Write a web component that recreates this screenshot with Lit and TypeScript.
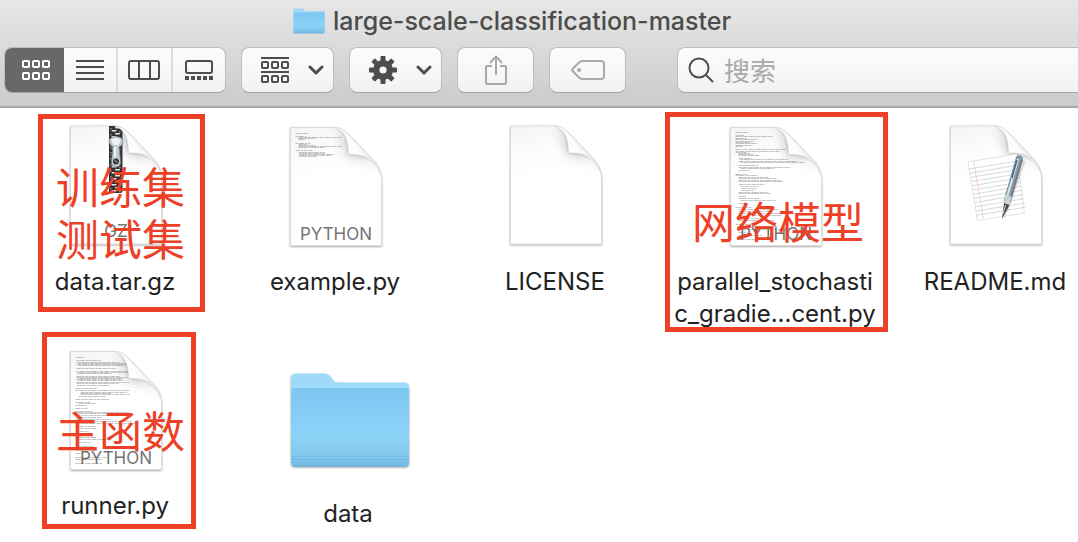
import { LitElement, html, svg, css, nothing } from "lit";
import { customElement, property } from "lit/decorators.js";

type Line = [number, number, number];

const EXAMPLE_CODE: Line[] = [
  [5, 6, 13], [5, 9, 11], [8, 10, 43], [8, 11, 17], [8, 12, 6],
  [5, 16, 15], [8, 17, 9], [8, 18, 17], [8, 19, 43], [8, 20, 26],
  [5, 23, 17], [8, 25, 27], [9, 26, 26], [8, 27, 36], [9, 28, 32], [8, 29, 18],
];

const GRADIENT_CODE: Line[] = [
  [5, 5, 14], [5, 8, 9], [5, 9, 37], [5, 11, 12], [5, 12, 22], [5, 14, 18], [5, 15, 15],
  [5, 16, 22], [5, 18, 16], [5, 19, 7], [5, 22, 50], [5, 24, 44], [5, 25, 11], [8, 26, 12],
  [8, 27, 15], [8, 28, 21], [8, 31, 12], [10, 32, 48], [8, 34, 58], [10, 35, 64],
  [8, 38, 20], [8, 40, 52], [10, 41, 34], [8, 43, 12], [5, 47, 11], [5, 48, 22],
  [8, 50, 30], [8, 51, 38], [8, 53, 42], [8, 54, 46], [8, 57, 26], [10, 59, 18],
  [11, 61, 15], [11, 63, 13], [8, 65, 29], [8, 66, 32], [8, 69, 8], [8, 71, 22],
  [10, 73, 36], [8, 76, 7], [5, 80, 16], [8, 82, 40], [8, 84, 33], [8, 86, 58],
  [8, 88, 43], [8, 91, 27], [8, 93, 36], [5, 97, 15], [8, 99, 40], [8, 102, 47],
  [8, 105, 8], [8, 108, 24], [8, 112, 17],
];

const RUNNER_CODE: Line[] = [
  [6, 6, 8], [6, 9, 25], [6, 11, 42], [8, 12, 51], [6, 13, 53], [8, 14, 46], [6, 17, 40],
  [6, 20, 51], [8, 21, 52], [6, 22, 35], [6, 25, 43], [6, 26, 53], [8, 27, 45],
  [6, 28, 44], [8, 29, 45], [6, 31, 53], [6, 32, 42], [6, 34, 33], [5, 37, 22],
  [5, 39, 54], [10, 41, 46], [10, 42, 31], [10, 43, 49], [8, 45, 28], [5, 48, 34],
  [5, 51, 15], [8, 52, 17], [5, 54, 11], [5, 57, 12], [5, 60, 17], [5, 61, 53],
  [5, 62, 55], [5, 64, 51], [5, 66, 26], [5, 68, 35], [8, 70, 53], [5, 72, 60],
  [5, 75, 20], [8, 77, 18], [5, 80, 13], [8, 83, 8], [5, 86, 21], [8, 88, 30],
  [8, 91, 13], [5, 95, 18], [5, 99, 22], [5, 102, 5], [5, 106, 31], [5, 108, 27],
  [5, 112, 27],
];

const PAGE = "M0 0H44C51 0 55 4 60 9L81 31C87 37 91 43 91 54V118H0Z";
const FLAP = "M44 0C54 3 58 12 58 27C73 26 84 31 90 46C88 39 85 35 81 31L60 9C55 4 51 0 44 0Z";

const sheet = (dy: number, content: unknown) => svg`
  <defs>
    <linearGradient id="page" x1="0" y1="0" x2="0.2" y2="1">
      <stop offset="0" stop-color="#f4f4f4" />
      <stop offset="0.3" stop-color="#fdfdfd" />
      <stop offset="0.5" stop-color="#ffffff" />
    </linearGradient>
    <linearGradient id="flap" x1="58" y1="27" x2="72" y2="18" gradientUnits="userSpaceOnUse">
      <stop offset="0" stop-color="#ffffff" />
      <stop offset="0.6" stop-color="#fdfdfd" />
      <stop offset="1" stop-color="#efefef" />
    </linearGradient>
    <clipPath id="edge"><path d=${PAGE} /></clipPath>
    <filter id="soft" x="-60%" y="-60%" width="220%" height="220%">
      <feGaussianBlur stdDeviation="7" />
    </filter>
    <filter id="tight" x="-60%" y="-60%" width="220%" height="220%">
      <feGaussianBlur stdDeviation="1.6" />
    </filter>
    <filter id="drop" x="-10%" y="-10%" width="120%" height="120%">
      <feDropShadow dx="0" dy="1" stdDeviation="1" flood-opacity="0.36" />
    </filter>
  </defs>
  <g transform="translate(18.5 ${dy})">
    <path d=${PAGE} fill="url(#page)" stroke="#d2d2d2" stroke-width="0.7" filter="url(#drop)" />
    <g clip-path="url(#edge)">
      <path d=${FLAP} opacity="0.36" filter="url(#soft)" />
      <path d=${FLAP} opacity="0.22" filter="url(#tight)" />
    </g>
    ${content}
    <path d=${FLAP} fill="url(#flap)" stroke="#cfcfcf" stroke-width="0.4" />
  </g>`;

const badge = (name: string, y: number) =>
  svg`<text class="badge" x="45.5" y=${y} text-anchor="middle">${name}</text>`;

const code = (lines: Line[]) => svg`
  ${lines.map(([x, y, w], i) => svg`
    <line x1=${x} x2=${x + w} y1=${y} y2=${y} stroke="#777" stroke-width="0.8"
      stroke-dasharray=${i % 2 ? "3 0.6 5 0.8 2 0.5" : "5 0.7 2 0.5 4 0.8"} opacity="0.55" />`)}
  ${badge("PYTHON", 112)}`;

const zipper = () => svg`
  <path d="M38.5 0H44C48 0 50 2 52 4V65Q52 67 49 67H41.5Q38.5 67 38.5 64Z" fill="#333" />
  ${Array.from({ length: 22 }, (_, i) => svg`
    <rect x=${i % 2 ? 41 : 44.5} y=${1 + i * 3} width="5" height="1.4" rx="0.6" fill="#e4e4e4" />
    <rect x=${i % 2 ? 48.5 : 39.5} y=${2 + i * 3} width="1.6" height="1.4" fill="#8b8b8b" />`)}
  <path d="M39 13Q45.5 8 52 13L52.5 16Q51.500 20 48.500 21L50 35Q50.500 41 45.500 41Q40.500 41 41 35L42.500 21Q39.500 19 38.500 16Z" fill="#c3ccd0" stroke="#727b80" stroke-width="0.6" />
  <path d="M40.5 13.500Q45.500 10.500 50.500 13.500L48 19H43Z" fill="#edf3f5" />
  <path d="M44.500 21V31" stroke="#f8ffff" stroke-width="1.5" />
  <circle cx="45.5" cy="35.5" r="3" fill="#333" />
  <path d="M44 34.500L47 36.500" stroke="#ddd" stroke-width="0.8" />
  ${badge("GZ", 111)}`;

const notes = () => svg`
  <g>
    <path d="M17.5 36L66 28L74 87L27 94.5Z" fill="#fff" stroke="#d4d4d4" stroke-width="0.6" />
    ${Array.from({ length: 12 }, (_, i) => {
      const y = 43 + i * 4.2;
      const x = 18.5 + i * 0.7;
      return svg`<path d="M${x} ${y}L${x + 48.5} ${y - 8}" stroke="#c5c8cb" stroke-width="0.7" />`;
    })}
    <path d="M23 35L33 93.5" stroke="#f3b5b5" stroke-width="0.6" />
    <path d="M72 34L75 36L58 84L53 93L57 75Z" fill="#000" opacity="0.13" />
    <path d="M66 31Q68 28 71.5 31L72 34L59.500 77L53.500 75Z" fill="#879cac" stroke="#566775" stroke-width="0.6" />
    <path d="M67.5 33L56 73" stroke="#d4e7f3" stroke-width="2" />
    <path d="M71 34L61 69" stroke="#7a6b5b" stroke-width="1" />
    <path d="M66.5 34L61.5 52" stroke="#315b80" stroke-width="1.2" />
    <path d="M54.5 69L53.5 77L59 79L61 71Z" fill="#cbd2d5" />
    <path d="M53.5 77L51.5 93L59 79Z" fill="#4b4b4b" />
    <path d="M55 79L52.5 88" stroke="#d6d6d6" stroke-width="1" />
  </g>`;

const folder = () => svg`
  <defs>
    <linearGradient id="front" x1="0" y1="0" x2="0" y2="1">
      <stop offset="0" stop-color="#7bc6f1" />
      <stop offset="0.6" stop-color="#8dd3f8" />
      <stop offset="0.85" stop-color="#83c9ee" />
      <stop offset="1" stop-color="#77bce3" />
    </linearGradient>
    <filter id="lift" x="-5%" y="-5%" width="110%" height="112%">
      <feDropShadow dx="0" dy="1" stdDeviation="0.8" flood-opacity="0.4" />
    </filter>
  </defs>
  <path d="M6 24Q6 19.5 11 19.5H40Q43 19.5 45 22L49 27Q50.5 28.5 53 28.5H119Q124 28.5 124 33V109Q124 112.5 120 112.5H10Q6 112.5 6 109Z" fill="#a0dafb" filter="url(#lift)" />
  <path d="M6 38Q6 34 10 34H120Q124 34 124 38V109Q124 112.5 120 112.5H10Q6 112.5 6 109Z" fill="url(#front)" />
  <path d="M6.5 102.5H123.5M6.5 105.5H123.5M6.5 108.5H123.5" stroke="#63aad5" stroke-width="0.9" opacity="0.5" />
  <path d="M8 112H122" stroke="#5ba5d0" stroke-width="1" />`;

@customElement("file-icon")
export class FileIcon extends LitElement {
  @property() kind = "blank";

  static styles = css`
    :host { display: block; width: 128px; height: 128px; }
    :host([kind="folder-small"]) { width: 32px; height: 26px; }
    svg { display: block; width: 100%; height: 100%; }
    .badge { font: 400 17px Inter, "Liberation Sans", sans-serif; fill: #747474; }
  `;

  private art() {
    switch (this.kind) {
      case "archive": return sheet(4, zipper());
      case "example": return sheet(5.5, code(EXAMPLE_CODE));
      case "gradient": return sheet(5.5, code(GRADIENT_CODE));
      case "runner": return sheet(5.5, code(RUNNER_CODE));
      case "notes": return sheet(4, notes());
      case "folder":
      case "folder-small": return folder();
      default: return sheet(4, nothing);
    }
  }

  render() {
    const box = this.kind === "folder-small" ? "4 17 122 98" : "0 0 128 128";
    return html`<svg viewBox=${box} aria-hidden="true">${this.art()}</svg>`;
  }
}

const squares = (y: number) => [0, 10, 20].map(
  (x) => svg`<rect x=${x + 1} y=${y + 1} width="6" height="6" rx="1" />`,
);

const chevron = html`<svg class="line bold" width="16" height="10" viewBox="0 0 16 10"><path d="M2 2L8 8L14 2" /></svg>`;

const glyphs = {
  grid: html`<svg class="line" width="28" height="20">${squares(0)}${squares(12)}</svg>`,
  list: html`<svg class="line" width="28" height="20"><path d="M0 1H28M0 7H28M0 13H28M0 19H28" /></svg>`,
  columns: html`<svg class="line" width="32" height="20"><rect x="1" y="1" width="30" height="18" rx="2" /><path d="M11 1V19M22 1V19" /></svg>`,
  gallery: html`<svg class="line" width="28" height="20"><rect x="1" y="1" width="26" height="12" rx="2" /><path d="M0 18H28" stroke-width="4" stroke-dasharray="4 2" /></svg>`,
  group: html`<svg class="line" width="28" height="26"><path d="M0 1H28M0 15H28" />${squares(4)}${squares(18)}</svg>`,
  gear: html`<svg width="28" height="28" viewBox="-14 -14 28 28">
    ${[0, 45, 90, 135].map((a) => svg`<rect x="-2.5" y="-14" width="5" height="28" rx="0.7" fill="#4d4d4d" transform="rotate(${a})" />`)}
    <circle r="10" fill="#4d4d4d" /><circle r="3.6" fill="#f8f8f8" /></svg>`,
  share: html`<svg class="line" width="22" height="30"><path d="M7 11H2Q1 11 1 12V28Q1 29 2 29H20Q21 29 21 28V12Q21 11 20 11H15M11 20V2M5 8L11 1.5L17 8" /></svg>`,
  tag: html`<svg class="line" width="34" height="20"><path d="M11 1H30Q33 1 33 4V16Q33 19 30 19H11Q9.5 19 8 17.5L2 11.5Q0.5 10 2 8.5L8 2.5Q9.5 1 11 1Z" /><circle cx="8" cy="10" r="1" /></svg>`,
  search: html`<svg class="line" width="26" height="26"><circle cx="11" cy="11" r="9.5" /><path d="M18 18L25 25" /></svg>`,
};

interface Entry {
  kind: string;
  name: string[];
  mark?: { place: string; lines: string[] };
  loose?: boolean;
}

const ENTRIES: Entry[] = [
  { kind: "archive", name: ["data.tar.gz"], mark: { place: "dataset", lines: ["训练集", "测试集"] } },
  { kind: "example", name: ["example.py"] },
  { kind: "blank", name: ["LICENSE"] },
  { kind: "gradient", name: ["parallel_stochasti", "c_gradie...cent.py"], mark: { place: "model", lines: ["网络模型"] } },
  { kind: "notes", name: ["README.md"] },
  { kind: "runner", name: ["runner.py"], mark: { place: "main", lines: ["主函数"] } },
  { kind: "folder", name: ["data"], loose: true },
];

@customElement("app-root")
export class AppRoot extends LitElement {
  static styles = css`
    :host {
      display: block;
      min-height: 100vh;
      overflow: hidden;
      background: #fff;
      color: #222;
      font-family: Inter, "Noto Sans CJK SC", "Liberation Sans", sans-serif;
    }
    * { box-sizing: border-box; }
    svg { display: block; flex: none; }
    .line { fill: none; stroke: currentColor; stroke-width: 2; stroke-linejoin: round; }
    .bold { stroke-width: 3; stroke-linecap: round; }
    .top {
      background: linear-gradient(#e7e7e7, #cbcbcb);
      border-bottom: 2px solid #a6a6a6;
      padding-bottom: 13px;
    }
    .title {
      display: flex;
      align-items: center;
      justify-content: center;
      gap: 8px;
      height: 42px;
      margin: 0 0 5px;
      padding-right: 5%;
      color: #4c4c4c;
      font-size: 25px;
      font-weight: 500;
      line-height: 32px;
    }
    .tools { display: flex; gap: 15px; padding-left: 4px; }
    .views, .tool, .search {
      display: flex;
      align-items: center;
      height: 46px;
      border: 1px solid #bdbdbd;
      border-bottom-color: #a3a3a3;
      border-radius: 8px;
      background: linear-gradient(#fcfcfc, #f2f2f2);
      color: #4d4d4d;
    }
    .views { overflow: hidden; width: 222px; flex: none; }
    .view {
      display: flex;
      flex: 1;
      align-items: center;
      justify-content: center;
      height: 46px;
      padding: 0;
      border: 0;
      border-left: 2px solid #dcdcdc;
      background: none;
      color: inherit;
    }
    .view:first-child { flex: 0 0 59px; padding-left: 3px; border-left: 0; background: #686868; color: #fff; }
    .view:nth-child(2) { border-left: 0; }
    .tool { flex: none; justify-content: center; width: 77px; padding: 0; }
    .menu { justify-content: space-between; width: 93px; padding: 0 9px 0 19px; }
    .dim { color: #a9a9a9; }
    .search {
      flex: 1;
      gap: 10px;
      margin-left: 36px;
      padding-left: 10px;
      border-right: 0;
      border-radius: 8px 0 0 8px;
    }
    .field {
      flex: 1;
      min-width: 0;
      height: 40px;
      padding: 0 0 2px;
      border: 0;
      outline: 0;
      background: none;
      color: inherit;
      font: 400 26px "Noto Sans CJK SC", sans-serif;
    }
    .field::placeholder { color: #a9a9a9; opacity: 1; }
    .files {
      display: grid;
      grid-template-columns: repeat(5, 220px);
      row-gap: 16px;
      margin: 0;
      padding: 14px 0 0 6px;
      list-style: none;
    }
    .file {
      position: relative;
      display: flex;
      flex-direction: column;
      align-items: center;
      gap: 16px;
    }
    .loose { margin: 8px -13px 0 13px; }
    .name { padding-right: 2px; font-size: 24px; line-height: 32px; text-align: center; white-space: nowrap; }
    .mark {
      position: absolute;
      border: 5px solid #ed4026;
      color: #ed4026;
      font: 400 43px/52px "Noto Sans CJK SC", sans-serif;
      white-space: nowrap;
    }
    .row { display: block; }
    .dataset { left: 32px; top: -8px; width: 167px; height: 198px; padding: 40px 0 0 13px; }
    .model { left: -1px; top: -10px; width: 223px; height: 220px; padding: 77px 0 0 22px; }
    .main { left: 36px; top: -14px; width: 154px; height: 197px; padding: 66px 0 0 9px; }
  `;

  render() {
    return html`
      <header class="top">
        <h1 class="title"><file-icon kind="folder-small"></file-icon><span>large-scale-classification-master</span></h1>
        <div class="tools">
          <div class="views" role="group" aria-label="View">
            <button class="view" aria-label="Icons" aria-pressed="true">${glyphs.grid}</button>
            <button class="view" aria-label="List">${glyphs.list}</button>
            <button class="view" aria-label="Columns">${glyphs.columns}</button>
            <button class="view" aria-label="Gallery">${glyphs.gallery}</button>
          </div>
          <button class="tool menu" aria-label="Group">${glyphs.group}${chevron}</button>
          <button class="tool menu" aria-label="Actions">${glyphs.gear}${chevron}</button>
          <button class="tool dim" aria-label="Share">${glyphs.share}</button>
          <button class="tool dim" aria-label="Tags">${glyphs.tag}</button>
          <label class="search">${glyphs.search}<input class="field" type="search" placeholder="搜索" aria-label="搜索" /></label>
        </div>
      </header>
      <ul class="files">
        ${ENTRIES.map((e) => html`
          <li class="file ${e.loose ? "loose" : ""}">
            <file-icon kind=${e.kind}></file-icon>
            <span class="name">${e.name.map((part, i) => html`${i ? html`<br />` : nothing}${part}`)}</span>
            ${e.mark
              ? html`<div class="mark ${e.mark.place}">${e.mark.lines.map((l) => html`<span class="row">${l}</span>`)}</div>`
              : nothing}
          </li>`)}
      </ul>
    `;
  }
}
